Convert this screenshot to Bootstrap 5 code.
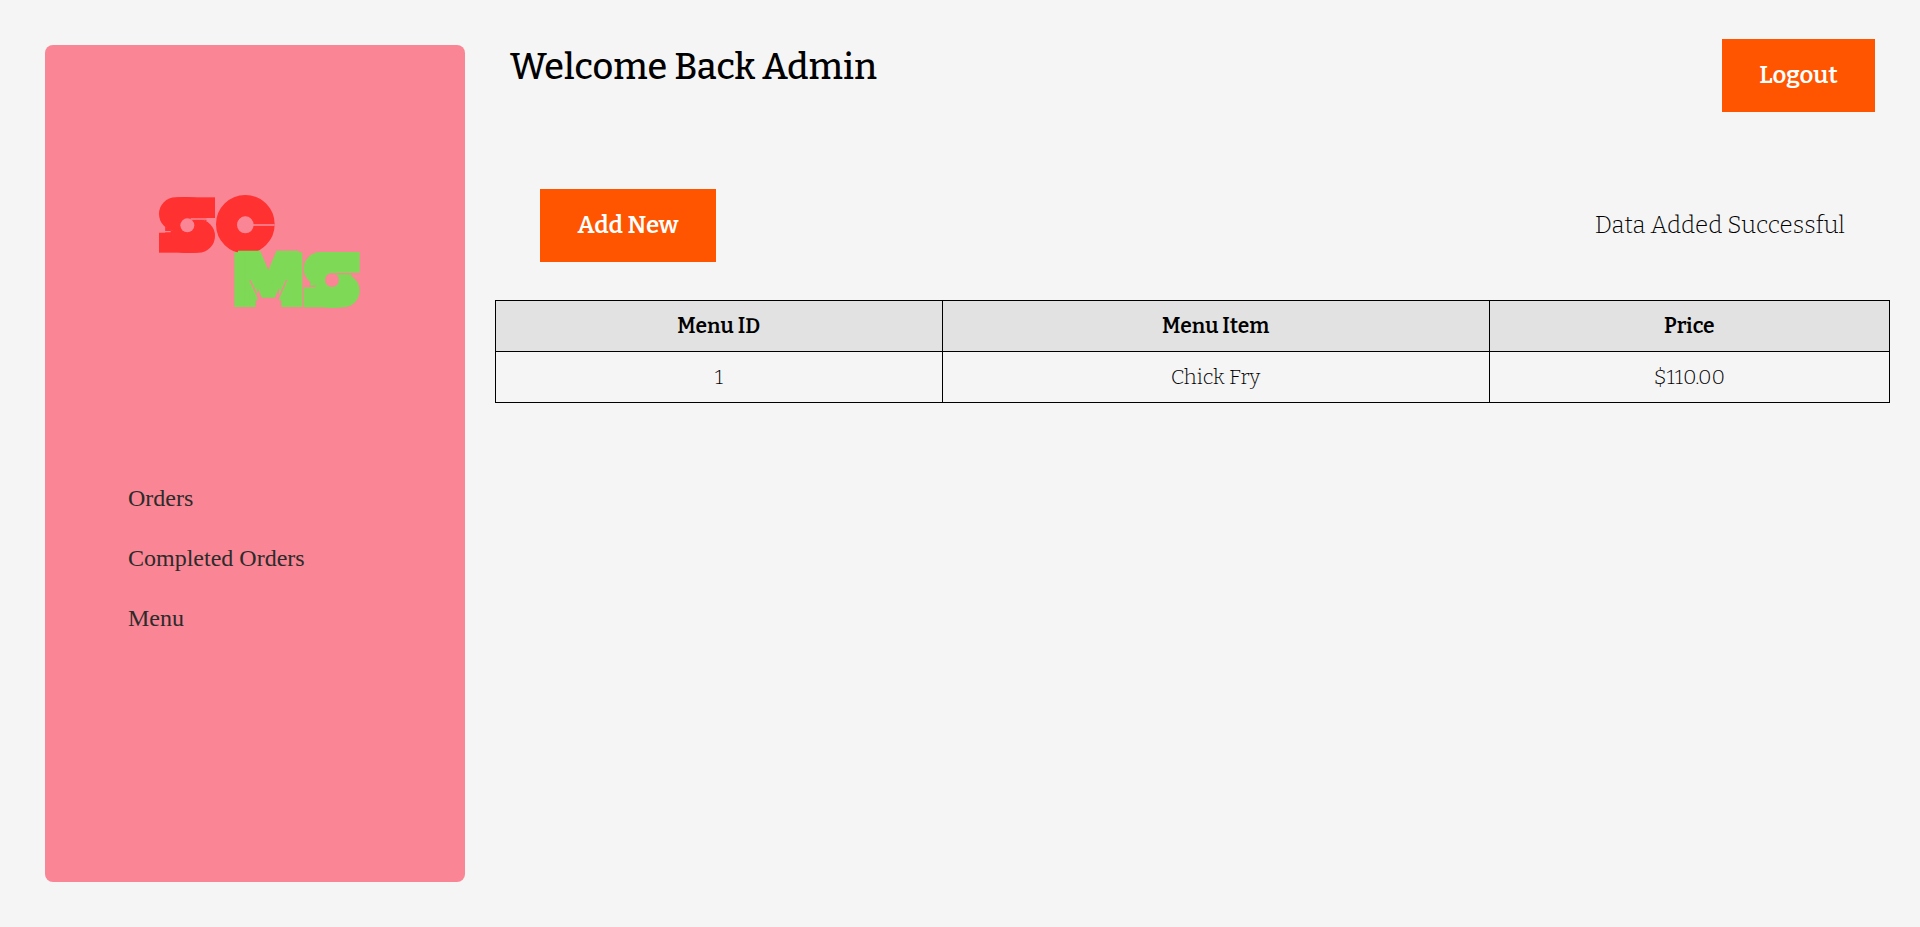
<!DOCTYPE html>
<html lang="en">
<head>
<meta charset="utf-8">
<meta name="viewport" content="width=device-width, initial-scale=1">
<title>Admin - Menu</title>
<link href="https://cdn.jsdelivr.net/npm/bootstrap@5.3.0/dist/css/bootstrap.min.css" rel="stylesheet">
<style>
  body { background: #f5f5f5; color: #000; font-family: Bitter, "DejaVu Serif Condensed", "DejaVu Serif", serif; }
  .side-panel { flex: 0 0 420px; min-height: calc(100vh - 90px); margin: 45px 0 45px 45px; padding-top: 150px; background: #fa8594; border-radius: 8px; }
  .brand { display: block; width: 203px; height: 113px; margin-left: 113px; overflow: visible; }
  .brand text { text-anchor: middle; }
  .brand-s { font: bold 180px "DejaVu Sans", sans-serif; stroke-width: 30px; }
  .brand-o { font: bold 120px "DejaVu Sans", sans-serif; }
  .brand-m { font: bold 195px "DejaVu Sans", sans-serif; stroke-width: 24px; }
  .side-menu { margin-top: 160px; padding-left: 83px; }
  .side-menu .nav-link { padding: 0; line-height: 60px; font-family: "Liberation Serif", serif; font-size: 24px; color: #2b2b2b; }
  .content { min-width: 0; padding: 39px 30px 45px; }
  .top-bar { padding: 0 15px; margin-bottom: 77px; }
  .top-bar h1 { font-size: 36px; line-height: 56px; font-weight: 550; margin: 0; }
  .tool-bar { padding: 0 45px; margin-bottom: 38px; }
  .btn-main { --bs-btn-bg: #ff5500; --bs-btn-color: #fff; --bs-btn-hover-bg: #e64d00; --bs-btn-hover-color: #fff; --bs-btn-active-bg: #cc4400; --bs-btn-active-color: #fff; border: 0; border-radius: 0; height: 73px; padding: 0 0 2px; font-size: 24px; line-height: 36px; font-weight: 600; }
  .btn-logout { width: 153px; }
  .btn-add { width: 176px; }
  .notice { padding-bottom: 2px; font-size: 24px; line-height: 36px; font-weight: 340; }
  .menu-table { --bs-table-color: #000; --bs-table-bg: transparent; border-color: #000; font-size: 21px; line-height: 30px; text-align: center; }
  .menu-table th, .menu-table td { padding: 10px 12px; border: 1px solid #000; }
  .menu-table th { background: #e2e2e2; font-weight: 600; }
  .menu-table td { font-weight: 340; }
</style>
</head>
<body>
<div class="d-flex">
  <aside class="side-panel">
    <svg class="brand" viewBox="54 45 609 339" role="img" aria-label="SOMS">
      <defs>
        <g id="swash">
          <rect x="110" y="52" width="115" height="62" stroke="none"/>
          <rect x="57" y="158" width="115" height="60" stroke="none"/>
          <rect x="57" y="52" width="130" height="100" rx="50" stroke="none"/>
          <rect x="95" y="118" width="130" height="100" rx="50" stroke="none"/>
        </g>
        <g id="cutout" fill="#fa8594" stroke="#fa8594">
          <circle cx="142" cy="136" r="21" stroke="none"/>
          <path d="M152 117H225M57 155H92" stroke-width="4"/>
        </g>
      </defs>
      <g fill="#ff3131" stroke="#ff3131">
        <text class="brand-s" x="141" y="201">S</text>
        <use href="#swash"/>
        <text class="brand-o" x="316" y="177" stroke="none">O</text>
      </g>
      <use href="#cutout"/>
      <circle cx="316" cy="133" r="56" fill="none" stroke="#ff3131" stroke-width="64"/>
      <circle cx="316" cy="135" r="25" fill="#fa8594"/>
      <path d="M338 135H404" stroke="#fa8594" stroke-width="5"/>
      <g fill="#7ed957" stroke="#7ed957">
        <text class="brand-m" x="385" y="369">M</text>
        <rect x="283" y="217" width="30" height="164" stroke="none"/>
        <rect x="457" y="217" width="30" height="164" stroke="none"/>
        <text class="brand-s" x="576" y="365">S</text>
        <use href="#swash" x="434" y="164"/>
      </g>
      <use href="#cutout" x="434" y="164"/>
      <path d="M330 300L358 360H413L440 300" fill="none" stroke="#fa8594" stroke-width="4"/>
      <rect x="347" y="361" width="77" height="23" fill="#fa8594"/>
    </svg>
    <nav class="side-menu nav flex-column">
      <a class="nav-link" href="#">Orders</a>
      <a class="nav-link" href="#">Completed Orders</a>
      <a class="nav-link" href="#">Menu</a>
    </nav>
  </aside>
  <main class="content flex-grow-1">
    <header class="top-bar d-flex justify-content-between align-items-start">
      <h1>Welcome Back Admin</h1>
      <button type="button" class="btn btn-main btn-logout">Logout</button>
    </header>
    <div class="tool-bar d-flex justify-content-between align-items-center">
      <button type="button" class="btn btn-main btn-add">Add New</button>
      <span class="notice" role="status">Data Added Successful</span>
    </div>
    <table class="table menu-table mb-0">
      <thead>
        <tr><th scope="col">Menu ID</th><th scope="col">Menu Item</th><th scope="col">Price</th></tr>
      </thead>
      <tbody>
        <tr><td>1</td><td>Chick Fry</td><td>$110.00</td></tr>
      </tbody>
    </table>
  </main>
</div>
<script src="https://cdn.jsdelivr.net/npm/bootstrap@5.3.0/dist/js/bootstrap.bundle.min.js"></script>
</body>
</html>
